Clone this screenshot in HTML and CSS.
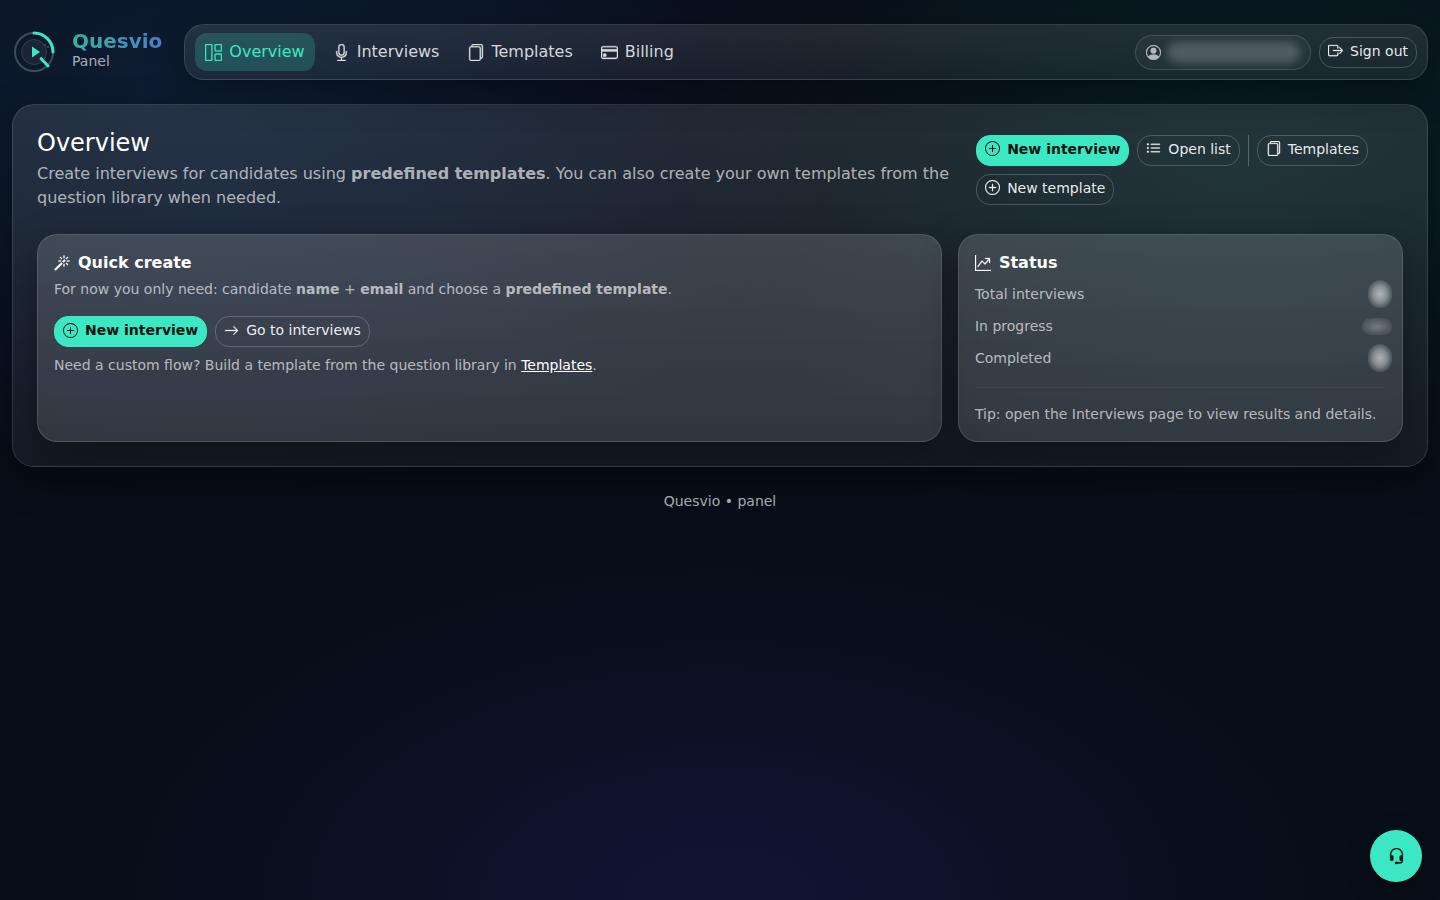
FILE: index.html
```html
<!DOCTYPE html>
<html lang="en">
<head>
    <meta charset="UTF-8">
    <meta name="viewport" content="width=device-width, initial-scale=1">
    <title>Overview - Quesvio</title>
    <link rel="stylesheet" href="styles.css">
</head>

<body>
<!-- icon set -->
<svg class="sprite" aria-hidden="true">
    <symbol id="i-columns" viewBox="0 0 16 16">
        <path d="M0 1a1 1 0 0 1 1-1h5a1 1 0 0 1 1 1v14a1 1 0 0 1-1 1H1a1 1 0 0 1-1-1zm9 0a1 1 0 0 1 1-1h5a1 1 0 0 1 1 1v5a1 1 0 0 1-1 1h-5a1 1 0 0 1-1-1zm0 9a1 1 0 0 1 1-1h5a1 1 0 0 1 1 1v5a1 1 0 0 1-1 1h-5a1 1 0 0 1-1-1zM1 1v14h5V1zm9 0v5h5V1zm0 9v5h5v-5z"/>
    </symbol>
    <symbol id="i-mic" viewBox="0 0 16 16">
        <path d="M3.5 6.5A.5.5 0 0 1 4 7v1a4 4 0 0 0 8 0V7a.5.5 0 0 1 1 0v1a5 5 0 0 1-4.5 4.975V15h3a.5.5 0 0 1 0 1h-7a.5.5 0 0 1 0-1h3v-2.025A5 5 0 0 1 3 8V7a.5.5 0 0 1 .5-.5"/>
        <path d="M10 8a2 2 0 1 1-4 0V3a2 2 0 1 1 4 0zM8 0a3 3 0 0 0-3 3v5a3 3 0 0 0 6 0V3a3 3 0 0 0-3-3"/>
    </symbol>
    <symbol id="i-files" viewBox="0 0 16 16">
        <path d="M13 0H6a2 2 0 0 0-2 2 2 2 0 0 0-2 2v10a2 2 0 0 0 2 2h7a2 2 0 0 0 2-2 2 2 0 0 0 2-2V2a2 2 0 0 0-2-2m0 13V4a2 2 0 0 0-2-2H5a1 1 0 0 1 1-1h7a1 1 0 0 1 1 1v10a1 1 0 0 1-1 1M3 4a1 1 0 0 1 1-1h7a1 1 0 0 1 1 1v10a1 1 0 0 1-1 1H4a1 1 0 0 1-1-1z"/>
    </symbol>
    <symbol id="i-card" viewBox="0 0 16 16">
        <path d="M0 4a2 2 0 0 1 2-2h12a2 2 0 0 1 2 2v8a2 2 0 0 1-2 2H2a2 2 0 0 1-2-2zm2-1a1 1 0 0 0-1 1v1h14V4a1 1 0 0 0-1-1zm13 4H1v5a1 1 0 0 0 1 1h12a1 1 0 0 0 1-1z"/>
        <path d="M2 10a1 1 0 0 1 1-1h1a1 1 0 0 1 1 1v1a1 1 0 0 1-1 1H3a1 1 0 0 1-1-1z"/>
    </symbol>
    <symbol id="i-person" viewBox="0 0 16 16">
        <path d="M11 6a3 3 0 1 1-6 0 3 3 0 0 1 6 0"/>
        <path fill-rule="evenodd" d="M0 8a8 8 0 1 1 16 0A8 8 0 0 1 0 8m8-7a7 7 0 0 0-5.468 11.37C3.242 11.226 4.805 10 8 10s4.757 1.225 5.468 2.37A7 7 0 0 0 8 1"/>
    </symbol>
    <symbol id="i-exit" viewBox="0 0 16 16">
        <path fill-rule="evenodd" d="M10 12.5a.5.5 0 0 1-.5.5h-8a.5.5 0 0 1-.5-.5v-9a.5.5 0 0 1 .5-.5h8a.5.5 0 0 1 .5.5v2a.5.5 0 0 0 1 0v-2A1.5 1.5 0 0 0 9.5 2h-8A1.5 1.5 0 0 0 0 3.5v9A1.5 1.5 0 0 0 1.5 14h8a1.5 1.5 0 0 0 1.5-1.5v-2a.5.5 0 0 0-1 0z"/>
        <path fill-rule="evenodd" d="M15.854 8.354a.5.5 0 0 0 0-.708l-3-3a.5.5 0 0 0-.708.708L14.293 7.5H5.5a.5.5 0 0 0 0 1h8.793l-2.147 2.146a.5.5 0 0 0 .708.708z"/>
    </symbol>
    <symbol id="i-plus" viewBox="0 0 16 16">
        <path d="M8 15A7 7 0 1 1 8 1a7 7 0 0 1 0 14m0 1A8 8 0 1 0 8 0a8 8 0 0 0 0 16"/>
        <path d="M8 4a.5.5 0 0 1 .5.5v3h3a.5.5 0 0 1 0 1h-3v3a.5.5 0 0 1-1 0v-3h-3a.5.5 0 0 1 0-1h3v-3A.5.5 0 0 1 8 4"/>
    </symbol>
    <symbol id="i-list" viewBox="0 0 16 16">
        <path fill-rule="evenodd" d="M5 11.5a.5.5 0 0 1 .5-.5h9a.5.5 0 0 1 0 1h-9a.5.5 0 0 1-.5-.5m0-4a.5.5 0 0 1 .5-.5h9a.5.5 0 0 1 0 1h-9a.5.5 0 0 1-.5-.5m0-4a.5.5 0 0 1 .5-.5h9a.5.5 0 0 1 0 1h-9a.5.5 0 0 1-.5-.5m-3 1a1 1 0 1 0 0-2 1 1 0 0 0 0 2m0 4a1 1 0 1 0 0-2 1 1 0 0 0 0 2m0 4a1 1 0 1 0 0-2 1 1 0 0 0 0 2"/>
    </symbol>
    <symbol id="i-magic" viewBox="0 0 16 16">
        <path d="M9.5 2.672a.5.5 0 1 0 1 0V.843a.5.5 0 0 0-1 0zm4.5.035A.5.5 0 0 0 13.293 2L12 3.293a.5.5 0 1 0 .707.707zM7.293 4A.5.5 0 1 0 8 3.293L6.707 2A.5.5 0 0 0 6 2.707zm-.621 2.5a.5.5 0 1 0 0-1H4.843a.5.5 0 1 0 0 1zm8.485 0a.5.5 0 1 0 0-1h-1.829a.5.5 0 0 0 0 1zM13.293 10A.5.5 0 1 0 14 9.293L12.707 8a.5.5 0 1 0-.707.707zM9.5 11.157a.5.5 0 0 0 1 0V9.328a.5.5 0 0 0-1 0zm1.854-5.097a.5.5 0 0 0 0-.706l-.708-.708a.5.5 0 0 0-.707 0L8.646 5.94a.5.5 0 0 0 0 .707l.708.708a.5.5 0 0 0 .707 0l1.293-1.293Zm-3 3a.5.5 0 0 0 0-.706l-.708-.708a.5.5 0 0 0-.707 0L.646 13.94a.5.5 0 0 0 0 .707l.707.707a.5.5 0 0 0 .707 0z"/>
    </symbol>
    <symbol id="i-arrow" viewBox="0 0 16 16">
        <path fill-rule="evenodd" d="M1 8a.5.5 0 0 1 .5-.5h11.793l-3.147-3.146a.5.5 0 0 1 .708-.708l4 4a.5.5 0 0 1 0 .708l-4 4a.5.5 0 0 1-.708-.708L13.293 8.5H1.5A.5.5 0 0 1 1 8"/>
    </symbol>
    <symbol id="i-graph" viewBox="0 0 16 16">
        <path fill-rule="evenodd" d="M0 0h1v15h15v1H0zm10 3.5a.5.5 0 0 1 .5-.5h4a.5.5 0 0 1 .5.5v4a.5.5 0 0 1-1 0V4.9l-3.613 4.417a.5.5 0 0 1-.74.037L7.06 6.767l-3.656 5.027a.5.5 0 0 1-.808-.588l4-5.5a.5.5 0 0 1 .758-.06l2.609 2.61L13.445 4H10.5a.5.5 0 0 1-.5-.5"/>
    </symbol>
    <symbol id="i-headset" viewBox="0 0 16 16">
        <path d="M8 1a5 5 0 0 0-5 5v1h1a1 1 0 0 1 1 1v3a1 1 0 0 1-1 1H3a1 1 0 0 1-1-1V6a6 6 0 1 1 12 0v6a2.5 2.5 0 0 1-2.5 2.5H9.366a1 1 0 0 1-.866.5h-1a1 1 0 1 1 0-2h1a1 1 0 0 1 .866.5H11.5A1.5 1.5 0 0 0 13 12h-1a1 1 0 0 1-1-1V8a1 1 0 0 1 1-1h1V6a5 5 0 0 0-5-5"/>
    </symbol>
</svg>

<header class="header">
    <a class="brand" href="#">
        <svg class="logo" viewBox="0 0 44 44" aria-hidden="true">
            <circle class="logo-ring" cx="22" cy="22" r="19"/>
            <circle class="logo-disc" cx="22" cy="22" r="12.5"/>
            <path class="logo-line" d="M22 3a19 19 0 0 1 19 19"/>
            <path class="logo-line" d="M29 28.500l7 7.500"/>
            <path class="logo-play" d="M20 16.500l8 5.500-8 5.500z"/>
            <circle class="logo-dot" cx="33" cy="15" r="1"/>
            <circle class="logo-dot" cx="36" cy="17" r="1"/>
        </svg>
        <span class="brand-text">
            <span class="brand-name">Quesvio</span>
            <span class="brand-sub">Panel</span>
        </span>
    </a>

    <div class="navbar">
        <nav class="menu">
            <a class="menu-link cur" href="#"><svg class="icon-lg"><use href="#i-columns"/></svg>Overview</a>
            <a class="menu-link" href="#"><svg class="icon-lg"><use href="#i-mic"/></svg>Interviews</a>
            <a class="menu-link" href="#"><svg class="icon-lg"><use href="#i-files"/></svg>Templates</a>
            <a class="menu-link" href="#"><svg class="icon-lg"><use href="#i-card"/></svg>Billing</a>
        </nav>
        <div class="account">
            <div class="user"><svg class="icon"><use href="#i-person"/></svg><span class="user-name"></span></div>
            <button class="btn" type="button"><svg class="icon"><use href="#i-exit"/></svg>Sign out</button>
        </div>
    </div>
</header>

<main class="panel">
    <div class="top">
        <div class="intro">
            <h1>Overview</h1>
            <p>Create interviews for candidates using <b>predefined templates</b>. You can also create your own templates from the question library when needed.</p>
        </div>
        <div class="actions">
            <a class="btn btn-main" href="#"><svg class="icon"><use href="#i-plus"/></svg>New interview</a>
            <a class="btn" href="#"><svg class="icon"><use href="#i-list"/></svg>Open list</a>
            <span class="line"></span>
            <a class="btn" href="#"><svg class="icon"><use href="#i-files"/></svg>Templates</a>
            <a class="btn" href="#"><svg class="icon"><use href="#i-plus"/></svg>New template</a>
        </div>
    </div>

    <div class="cards">
        <section class="card">
            <h2><svg class="icon-md"><use href="#i-magic"/></svg>Quick create</h2>
            <p class="lead">For now you only need: candidate <b>name</b> + <b>email</b> and choose a <b>predefined template</b>.</p>
            <div class="buttons">
                <a class="btn btn-main" href="#"><svg class="icon"><use href="#i-plus"/></svg>New interview</a>
                <a class="btn" href="#"><svg class="icon"><use href="#i-arrow"/></svg>Go to interviews</a>
            </div>
            <p class="note">Need a custom flow? Build a template from the question library in <a href="#">Templates</a>.</p>
        </section>

        <section class="card">
            <h2><svg class="icon-md"><use href="#i-graph"/></svg>Status</h2>
            <ul class="stats">
                <li>Total interviews<span class="value"></span></li>
                <li>In progress<span class="value value-wide"></span></li>
                <li>Completed<span class="value"></span></li>
            </ul>
            <hr>
            <p>Tip: open the Interviews page to view results and details.</p>
        </section>
    </div>
</main>

<footer class="footer">Quesvio • panel</footer>

<button class="support" type="button" aria-label="Support"><svg class="icon-lg"><use href="#i-headset"/></svg></button>
</body>
</html>
```

FILE: styles.css
```css
*{
    padding: 0;
    margin: 0;
    box-sizing: border-box;
}
body{
    min-height: 100vh;
    padding: 24px 12px;
    font: 14px/20px "DejaVu Sans", sans-serif;
    color: rgba(255,255,255,.65);
    background-color: #080e19;
    background-image:
        radial-gradient(900px 550px at 15% 12%, rgba(50,120,210,.15), transparent 70%),
        radial-gradient(800px 500px at 86% 18%, rgba(30,180,140,.11), transparent 70%),
        radial-gradient(850px 480px at 50% 100%, rgba(80,60,220,.14), transparent 70%);
    background-attachment: fixed;
}
a{
    color: inherit;
    text-decoration: none;
}
svg{
    fill: currentColor;
    flex: none;
}
.sprite{
    position: absolute;
    width: 0;
    height: 0;
}
.icon{
    width: 15px;
    height: 15px;
}
.icon-md{
    width: 16px;
    height: 16px;
}
.icon-lg{
    width: 17px;
    height: 17px;
}
.icon,
.icon-md,
.icon-lg{
    stroke: currentColor;
    stroke-width: .3;
    overflow: visible;
}

/* header */
.header{
    display: flex;
    align-items: center;
    gap: 22px;
    margin-bottom: 24px;
}
.brand{
    display: flex;
    align-items: center;
    gap: 16px;
}
.logo{
    width: 44px;
    height: 44px;
}
.logo-ring{
    fill: none;
    stroke: #414c58;
    stroke-width: 2;
}
.logo-disc{
    fill: #1b2536;
    stroke: #343f4e;
}
.logo-line{
    fill: none;
    stroke: #3ce8c3;
    stroke-width: 3;
    stroke-linecap: round;
}
.logo-play{
    fill: #3ce8c3;
}
.logo-dot{
    fill: #46505f;
}
.brand-text{
    display: flex;
    flex-direction: column;
    padding-bottom: 2px;
}
.brand-name{
    font-size: 20px;
    line-height: 20px;
    font-weight: bold;
    color: transparent;
    background: linear-gradient(90deg, #33b39e, #4a7fcb);
    -webkit-background-clip: text;
    background-clip: text;
}
.navbar{
    flex: 1;
    display: flex;
    align-items: center;
    justify-content: space-between;
    padding: 8px 10px;
    border: 1px solid rgba(255,255,255,.12);
    border-radius: 20px;
    background: linear-gradient(rgba(255,255,255,.1), rgba(255,255,255,.06));
    box-shadow: 0 12px 36px rgba(0,0,0,.35);
}
.menu,
.account{
    display: flex;
    align-items: center;
    gap: 8px;
}
.menu-link{
    display: flex;
    align-items: center;
    gap: 7px;
    padding: 7px 10px;
    border-radius: 12px;
    font-size: 16px;
    line-height: 24px;
    color: rgba(255,255,255,.82);
}
.menu .cur{
    color: #3ce8c3;
    background: rgba(60,232,195,.2);
}
.user{
    display: flex;
    align-items: center;
    gap: 6px;
    padding: 6px 10px;
    border: 1px solid rgba(255,255,255,.14);
    border-radius: 18px;
    background: rgba(255,255,255,.04);
}
.user-name{
    width: 133px;
    height: 21px;
    border-radius: 10px;
    background: rgba(255,255,255,.2);
    filter: blur(4px);
}

/* buttons */
.btn{
    display: inline-flex;
    align-items: center;
    gap: 7px;
    padding: 3px 8px 6px;
    border: 1px solid rgba(255,255,255,.2);
    border-radius: 14px;
    font: inherit;
    color: rgba(255,255,255,.92);
    background: none;
    cursor: pointer;
}
.btn-main{
    border-color: #3ce8c3;
    font-weight: bold;
    color: #04120f;
    background: #3ce8c3;
}
.btn-main .icon{
    stroke: none;
}

/* overview */
.panel{
    padding: 24px;
    border: 1px solid rgba(255,255,255,.12);
    border-radius: 22px;
    background: linear-gradient(rgba(255,255,255,.1), rgba(255,255,255,.05));
    box-shadow: 0 12px 36px rgba(0,0,0,.35);
}
.top{
    display: grid;
    grid-template-columns: 11fr 5fr;
    align-items: center;
    margin-bottom: 24px;
}
.intro h1{
    margin-bottom: 4px;
    font-size: 24px;
    line-height: 29px;
    font-weight: normal;
    color: #fff;
}
.intro p{
    font-size: 16px;
    line-height: 24px;
}
.actions,
.buttons{
    display: flex;
    flex-wrap: wrap;
    gap: 8px;
}
.line{
    width: 1px;
    background: rgba(255,255,255,.25);
}
.cards{
    display: grid;
    grid-template-columns: 61fr 30fr;
    gap: 16px;
}
.card{
    padding: 16px 16px 17px;
    border: 1px solid rgba(255,255,255,.12);
    border-radius: 20px;
    background: linear-gradient(rgba(255,255,255,.15), rgba(255,255,255,.12));
    box-shadow: 0 12px 36px rgba(0,0,0,.35);
}
.card h2{
    display: flex;
    align-items: center;
    gap: 8px;
    font-size: 16px;
    line-height: 24px;
    color: #fff;
}
.lead{
    margin: 4px 0 17px;
}
.note{
    margin-top: 8px;
}
.note a{
    color: #fff;
    text-decoration: underline;
}
.stats{
    display: flex;
    flex-direction: column;
    gap: 8px;
    margin-top: 8px;
    list-style: none;
}
.stats li{
    display: flex;
    align-items: center;
    justify-content: space-between;
    height: 24px;
    padding-bottom: 2px;
}
/* hidden numbers */
.value{
    width: 24px;
    height: 28px;
    margin-right: -6px;
    border-radius: 12px;
    background: radial-gradient(closest-side, rgba(255,255,255,.6), rgba(255,255,255,.4) 55%, rgba(255,255,255,.1));
}
.value-wide{
    width: 30px;
    height: 17px;
    background: radial-gradient(closest-side, rgba(255,255,255,.3), rgba(255,255,255,.08));
}
.card hr{
    margin: 16px 0;
    border: 0;
    border-top: 1px solid rgba(255,255,255,.04);
}

.footer{
    margin-top: 24px;
    text-align: center;
}
.support{
    position: fixed;
    right: 18px;
    bottom: 18px;
    display: flex;
    align-items: center;
    justify-content: center;
    width: 52px;
    height: 52px;
    border: 0;
    border-radius: 50%;
    color: #04120f;
    background: #3ce8c3;
    box-shadow: 0 8px 24px rgba(0,0,0,.35);
    cursor: pointer;
}
```
